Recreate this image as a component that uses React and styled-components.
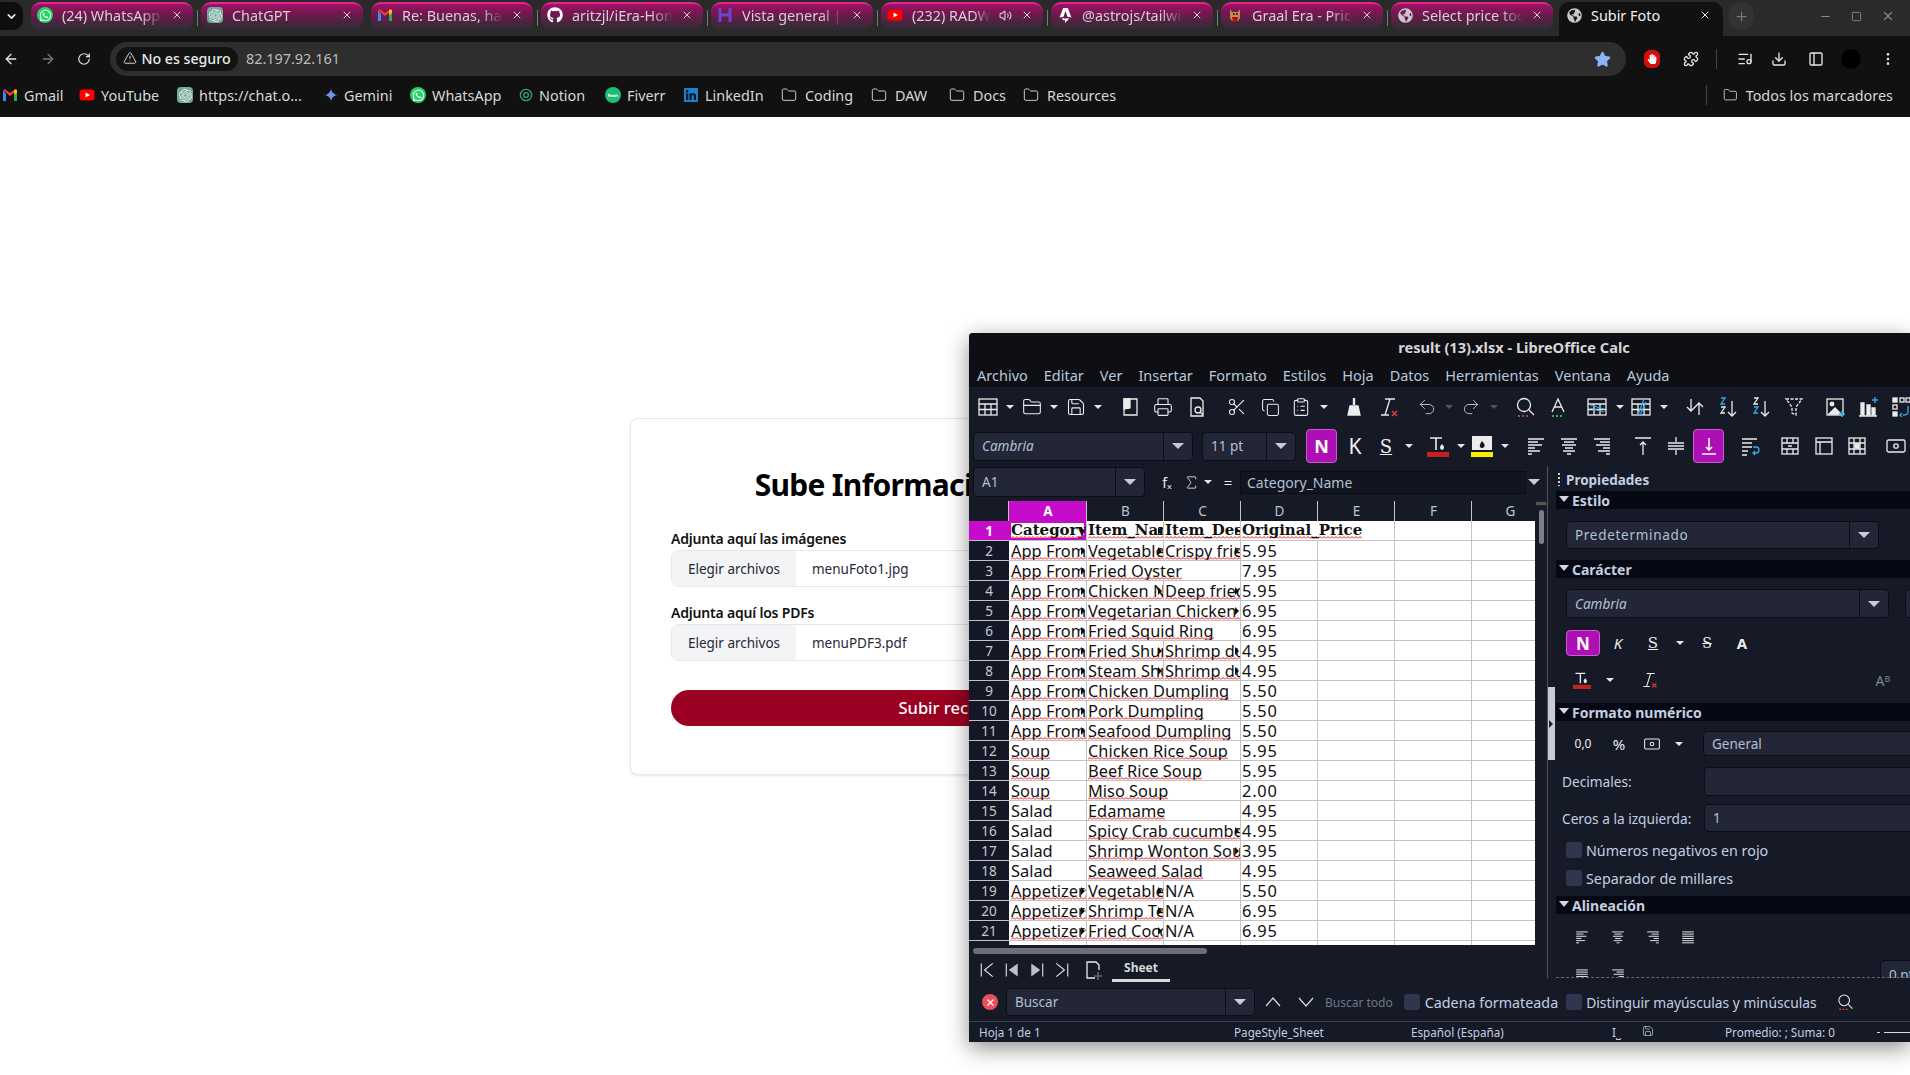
import React from "react";
import styled, { createGlobalStyle } from "styled-components";
import {
  ArrowLeft, ArrowRight, RotateCw, Star, Puzzle, Download, Folder, X, Plus, Minus,
  TriangleAlert, EllipsisVertical, Scissors, Printer, Undo2, Redo2, Copy,
  ClipboardList, Save, FolderClosed, Square, ListMusic, PanelLeft, Sigma, ChevronDown, Volume2,
} from "lucide-react";
import { FaWhatsapp, FaGithub, FaGlobeAmericas, FaLinkedin, FaHandPaper } from "react-icons/fa";
import { SiOpenai, SiFiverr, SiGooglegemini, SiAstro } from "react-icons/si";

const Global = createGlobalStyle`
  html, body { margin: 0; padding: 0; background: #fff; }
  body { width: 1910px; height: 1075px; overflow: hidden; font-family: "Noto Sans", sans-serif; }
`;

const Screen = styled.div`
  position: relative;
  width: 1910px;
  height: 1075px;
  overflow: hidden;
  background: #fff;
`;

/* browser chrome */
const TabStrip = styled.div`
  display: flex;
  align-items: flex-start;
  height: 36px;
  background: #2a2a2a;
  padding-top: 2px;
  box-sizing: border-box;
`;
const TabMenu = styled.div`
  width: 23px;
  height: 28px;
  margin-right: 8px;
  background: #0e0e0e;
  border-radius: 0 10px 10px 0;
  color: #eee;
  display: flex;
  align-items: center;
  justify-content: center;
`;
const Tab = styled.div`
  position: relative;
  display: flex;
  align-items: center;
  flex: none;
  width: ${(p) => (p.$active ? 164 : 162)}px;
  height: ${(p) => (p.$active ? 34 : 28)}px;
  margin-right: ${(p) => (p.$active ? 7 : 8)}px;
  margin-left: ${(p) => (p.$active ? -2 : 0)}px;
  padding: ${(p) => (p.$active ? "0 12px 8px 7px" : "0 10px 4px 6px")};
  box-sizing: border-box;
  border-radius: 10px 10px ${(p) => (p.$active ? "0 0" : "10px 10px")};
  color: ${(p) => (p.$active ? "#f1f1f1" : "#d4d0d4")};
  background: ${(p) => (p.$active ? "#111" : "linear-gradient(180deg, #a01268 0%, #7c1553 30%, #3a2a38 85%, #2f2a33 100%)")};
  border-top: ${(p) => (p.$active ? "0" : "2px solid #e4258f")};
  font-size: 14.4px;
  &::after {
    content: "";
    display: ${(p) => (p.$sep ? "block" : "none")};
    position: absolute;
    right: -5px;
    top: 6px;
    width: 1px;
    height: 16px;
    background: #777;
  }
`;
const Favicon = styled.span`
  flex: none;
  width: 16px;
  height: 16px;
  display: flex;
  align-items: center;
  justify-content: center;
  color: #fff;
`;
const TabTitle = styled.span`
  flex: 1;
  margin: 0 ${(p) => (p.$fade ? 8 : 0)}px 0 9px;
  white-space: nowrap;
  overflow: hidden;
  -webkit-mask-image: ${(p) => (p.$fade ? "linear-gradient(90deg, #000 78%, transparent 100%)" : "none")};
`;
const SoundIcon = styled.span`
  flex: none;
  display: flex;
  margin-right: 9px;
`;
const NewTab = styled.div`
  width: 26px;
  height: 28px;
  margin-left: -2px;
  border-radius: 13px;
  background: #333;
  color: #777;
  display: flex;
  align-items: center;
  justify-content: center;
`;
const WinControls = styled.div`
  margin-left: auto;
  display: flex;
  align-items: center;
  gap: 19px;
  height: 28px;
  padding-right: 15px;
  color: #888;
`;
const Toolbar = styled.div`
  display: flex;
  align-items: center;
  height: 43px;
  background: #111;
  padding: 3px 14px 0 3px;
  box-sizing: border-box;
  color: #e6e6e6;
`;
const NavBtn = styled.span`
  width: 16px;
  display: flex;
  justify-content: center;
  margin-left: ${(p) => p.$ml || 0}px;
  color: ${(p) => p.$c || "#e6e6e6"};
`;
const Omnibox = styled.div`
  width: 1516px;
  height: 34px;
  margin-left: 18px;
  flex: none;
  background: #2e2e2e;
  border-radius: 17px;
  display: flex;
  align-items: center;
  padding: 0 15px 0 6px;
  box-sizing: border-box;
`;
const Chip = styled.div`
  width: 122px;
  height: 24px;
  padding-bottom: 2px;
  background: #121212;
  border-radius: 12px;
  display: flex;
  align-items: center;
  justify-content: center;
  gap: 4px;
  font-size: 14.2px;
  color: #eaeaea;
  font-weight: 500;
  white-space: nowrap;
  box-sizing: border-box;
`;
const Url = styled.span`
  margin: 0 0 2px 8px;
  color: #bdbdbd;
  font-size: 14.4px;
  flex: 1;
`;
const BarSep = styled.span`
  width: 1px;
  height: 20px;
  background: #444;
  margin-left: ${(p) => p.$ml || 0}px;
`;
const StopBadge = styled.span`
  width: 16px;
  height: 18px;
  border-radius: 6px;
  background: #d60d0d;
  color: #fff;
  display: flex;
  align-items: center;
  justify-content: center;
  margin-left: ${(p) => p.$ml}px;
`;
const Avatar = styled.span`
  width: 20px;
  height: 20px;
  border-radius: 50%;
  background: #000;
  margin-left: ${(p) => p.$ml}px;
`;
const Bookmarks = styled.div`
  display: flex;
  align-items: center;
  height: 38px;
  background: #111;
  padding: 0 0 6px 2px;
  box-sizing: border-box;
  color: #d8d8d8;
  font-size: 14.4px;
`;
const Bookmark = styled.div`
  flex: none;
  width: ${(p) => p.$w}px;
  margin-left: ${(p) => p.$ml || 0}px;
  display: flex;
  align-items: center;
  gap: ${(p) => p.$gap || 6}px;
  white-space: nowrap;
`;
const RoundIcon = styled.span`
  display: flex;
  flex: none;
  width: 16px;
  height: 16px;
  border-radius: ${(p) => p.$r}px;
  background: ${(p) => p.$bg};
  align-items: center;
  justify-content: center;
`;

/* page form behind the window */
const Page = styled.main`
  height: 958px;
  display: flex;
  align-items: center;
  justify-content: center;
`;
const Card = styled.section`
  width: 650px;
  box-sizing: border-box;
  padding: 48px 40px 48px;
  background: #fff;
  border: 1px solid #e5e7eb;
  border-radius: 8px;
  box-shadow: 0 1px 3px rgba(0, 0, 0, 0.1);
`;
const Title = styled.h1`
  margin: 0 0 26px;
  padding-right: 6px;
  font-size: 30px;
  line-height: 36px;
  font-weight: 700;
  letter-spacing: -0.7px;
  color: #000;
  text-align: center;
  white-space: nowrap;
`;
const Label = styled.label`
  display: block;
  font-size: 14px;
  line-height: 20px;
  font-weight: 600;
  letter-spacing: -0.2px;
  color: #111;
  margin-bottom: 1px;
`;
const FileField = styled.div`
  display: flex;
  height: 37px;
  margin-bottom: 16px;
  border: 1px solid #e5e7eb;
  border-radius: 8px;
  overflow: hidden;
  font-size: 13.5px;
  color: #1f2937;
  box-sizing: border-box;
`;
const FileBtn = styled.span`
  width: 124px;
  padding-top: 1px;
  box-sizing: border-box;
  background: #f3f4f6;
  display: flex;
  align-items: center;
  justify-content: center;
`;
const FileName = styled.span`
  padding: 1px 0 0 16px;
  display: flex;
  align-items: center;
`;
const Submit = styled.button`
  display: block;
  width: 100%;
  height: 36px;
  margin-top: 29px;
  border: 0;
  border-radius: 18px;
  background: #990021;
  color: #fff;
  font: 500 16.5px "Noto Sans", sans-serif;
`;

/* LibreOffice window */
const Win = styled.div`
  position: absolute;
  left: 969px;
  top: 333px;
  width: 941px;
  height: 709px;
  background: #161a27;
  border-radius: 4px 0 0 0;
  box-shadow: 0 6px 22px rgba(0, 0, 0, 0.45);
  color: #c3cfe0;
  overflow: hidden;
`;
const WinTitle = styled.div`
  width: 1090px;
  height: 28px;
  background: #0d0f15;
  color: #d6d6d6;
  font-size: 14.6px;
  font-weight: 700;
  line-height: 29px;
  text-align: center;
`;
const Menu = styled.div`
  height: 26px;
  background: #0d0f15;
  display: flex;
  align-items: center;
  gap: 16px;
  padding: 2px 0 0 8px;
  box-sizing: border-box;
  font-size: 14.5px;
  color: #b8c8dc;
`;
const IconRow = styled.div`
  display: flex;
  align-items: center;
  height: ${(p) => p.$h}px;
  white-space: nowrap;
`;
const Tool = styled.span`
  flex: none;
  width: ${(p) => p.$w || 22}px;
  height: 22px;
  margin-left: ${(p) => p.$ml || 0}px;
  display: flex;
  align-items: center;
  justify-content: center;
  color: #ececec;
`;
const Drop = styled.span`
  flex: none;
  width: 8px;
  margin-left: ${(p) => p.$ml || 0}px;
  height: 0;
  border-left: 4px solid transparent;
  border-right: 4px solid transparent;
  border-top: 4px solid ${(p) => p.$c || "#e6e6e6"};
  box-sizing: border-box;
`;
const Combo = styled.div`
  flex: none;
  display: flex;
  width: ${(p) => p.$w}px;
  height: ${(p) => p.$h || 29}px;
  margin-left: ${(p) => p.$ml || 0}px;
  background: #222636;
  border: 1px solid #0c0e16;
  border-radius: 4px;
  box-sizing: border-box;
  font-size: 13.5px;
  color: #b2c0d4;
`;
const ComboText = styled.span`
  flex: 1;
  padding-left: ${(p) => p.$pl || 8}px;
  display: flex;
  align-items: center;
  font-style: ${(p) => (p.$italic ? "italic" : "normal")};
  letter-spacing: ${(p) => p.$ls || 0}px;
`;
const ComboArrow = styled.span`
  flex: none;
  width: 28px;
  border-left: 1px solid #0c0e16;
  display: flex;
  align-items: center;
  justify-content: center;
`;
const BigDrop = styled.span`
  width: 0;
  height: 0;
  border-left: 6px solid transparent;
  border-right: 6px solid transparent;
  border-top: 6px solid #c8ccd4;
`;
const ActiveBtn = styled.span`
  flex: none;
  width: ${(p) => p.$w || 31}px;
  height: ${(p) => p.$h || 34}px;
  margin-left: ${(p) => p.$ml || 0}px;
  background: #ae0fb5;
  border: 1px solid #c95fce;
  border-radius: 4px;
  box-sizing: border-box;
  color: #fff;
  font: 700 ${(p) => p.$fs || 18}px "Noto Sans", sans-serif;
  display: flex;
  align-items: center;
  justify-content: center;
`;
const Glyph = styled.span`
  flex: none;
  width: ${(p) => p.$w || 22}px;
  margin-left: ${(p) => p.$ml || 0}px;
  text-align: center;
  color: ${(p) => p.$c || "#eee"};
  font-family: ${(p) => (p.$serif ? '"DejaVu Serif", serif' : '"Noto Sans", sans-serif')};
  font-size: ${(p) => p.$fs || 18}px;
  font-weight: ${(p) => p.$weight || 400};
  font-style: ${(p) => (p.$italic ? "italic" : "normal")};
  text-decoration: ${(p) => p.$deco || "none"};
`;
const Body = styled.div`
  display: flex;
  align-items: flex-start;
  height: 517px;
  margin-top: 1px;
`;
const LeftCol = styled.div`
  width: 578px;
  flex: none;
`;
const FormulaRow = styled.div`
  display: flex;
  align-items: center;
  height: 35px;
  padding-bottom: 3px;
  box-sizing: border-box;
`;
const FormulaInput = styled.div`
  flex: none;
  width: 286px;
  height: 23px;
  margin-left: 1px;
  background: #121521;
  border: 1px solid #0a0c13;
  box-sizing: border-box;
  padding-left: 6px;
  font-size: 14px;
  line-height: 21px;
  color: #b2c0d4;
`;
const GridWrap = styled.div`
  display: flex;
  height: 444px;
  overflow: hidden;
`;
const Sheet = styled.div`
  width: 566px;
  flex: none;
  overflow: hidden;
`;
const Row = styled.div`
  display: flex;
  height: 20px;
`;
const RowHead = styled.div`
  flex: none;
  width: 40px;
  box-sizing: border-box;
  border-bottom: 1px solid #c4c4c4;
  background: ${(p) => (p.$on ? "#c60ccb" : "#141826")};
  color: ${(p) => (p.$on ? "#fff" : "#c9c9c9")};
  font-weight: ${(p) => (p.$on ? 700 : 400)};
  font-size: 13.5px;
  text-align: center;
  line-height: 20px;
`;
const ColHead = styled.div`
  flex: none;
  width: ${(p) => p.$w || 77}px;
  box-sizing: border-box;
  padding-left: 1px;
  border-right: 1px solid #c4c4c4;
  background: ${(p) => (p.$on ? "#c60ccb" : "#161a27")};
  color: ${(p) => (p.$on ? "#fff" : "#bcc6d4")};
  font-weight: ${(p) => (p.$on ? 700 : 400)};
  font-size: 13.5px;
  text-align: center;
  line-height: 20px;
`;
const Cell = styled.div`
  position: relative;
  flex: none;
  width: ${(p) => p.$w || 77}px;
  box-sizing: border-box;
  background: #fff;
  border-right: 1px solid #c4c4c4;
  border-bottom: 1px solid #c4c4c4;
  padding-left: ${(p) => p.$pl || 1}px;
  overflow: hidden;
  white-space: nowrap;
  color: #111;
  font: ${(p) => (p.$head ? '700 15px/19px "DejaVu Serif", serif' : '400 16.4px/19px "Noto Sans", sans-serif')};
  letter-spacing: ${(p) => p.$ls || 0}px;
  ${(p) => p.$sel && "box-shadow: inset 0 0 0 2px #c60ccb;"}
`;
/* LibreOffice's red spell-check zigzag */
const zigzag = "url(\"data:image/svg+xml,%3Csvg xmlns='http://www.w3.org/2000/svg' width='4' height='3'%3E%3Cpath d='M0 2.500L2 .500L4 2.500' fill='none' stroke='%23e8141c' stroke-width='1'/%3E%3C/svg%3E\")";
const Spell = styled.span`
  background-image: ${zigzag};
  background-size: 4px 3px;
  background-repeat: repeat-x;
  background-position: 0 calc(100% - ${(p) => p.$off ?? 2}px);
`;
const ClipMark = styled.i`
  position: absolute;
  right: 1px;
  top: 6px;
  border-left: 4px solid #111;
  border-top: 4px solid transparent;
  border-bottom: 4px solid transparent;
`;
const FillHandle = styled.i`
  position: absolute;
  right: 0;
  bottom: 0;
  width: 5px;
  height: 5px;
  background: #c60ccb;
`;
const VScroll = styled.div`
  width: 12px;
  flex: none;
  display: flex;
  flex-direction: column;
  align-items: center;
`;
const SplitMark = styled.span`
  width: 12px;
  height: 5px;
  margin-bottom: 4px;
  background: #555;
  border: 1px solid #222;
  box-sizing: border-box;
`;
const VThumb = styled.span`
  width: 5px;
  height: 34px;
  background: #7d7f86;
  border-radius: 3px;
`;
const HScroll = styled.div`
  height: 12px;
  padding: 3px 0 0 4px;
  box-sizing: border-box;
`;
const HThumb = styled.div`
  width: 234px;
  height: 6px;
  border-radius: 3px;
  background: #6c6f78;
`;
const SheetTab = styled.div`
  width: 58px;
  height: 24px;
  margin-left: 8px;
  border-bottom: 3px solid #d8d8d8;
  box-sizing: border-box;
  color: #d8d8d8;
  font-size: 12px;
  font-weight: 700;
  text-align: center;
  line-height: 20px;
`;
const Panel = styled.aside`
  position: relative;
  flex: none;
  width: 363px;
  height: 512px;
  border-left: 1px solid #50535e;
  box-sizing: border-box;
  overflow: hidden;
  padding-left: 8px;
  &::after {
    content: "";
    position: absolute;
    left: 8px;
    right: 0;
    bottom: 0;
    border-bottom: 1px dashed #666;
  }
`;
const PanelTitle = styled.div`
  height: 25px;
  display: flex;
  align-items: center;
  padding: 2px 0 0 1px;
  box-sizing: border-box;
  gap: 6px;
  font-size: 13.5px;
  font-weight: 700;
  color: #c3cfe0;
`;
const Grip = styled.span`
  width: 2px;
  height: 13px;
  background: repeating-linear-gradient(180deg, #d0d0d0 0 2px, transparent 2px 4px);
  margin-left: 1px;
`;
const SectionHead = styled.div`
  height: 18px;
  margin-top: ${(p) => p.$mt || 0}px;
  background: #060814;
  display: flex;
  align-items: center;
  gap: 3px;
  padding-left: 3px;
  font-size: 14px;
  font-weight: 700;
  color: #c3cfe0;
`;
const HeadDrop = styled.span`
  width: 0;
  height: 0;
  border-left: 5.5px solid transparent;
  border-right: 5.5px solid transparent;
  border-top: 6px solid #d6d6d6;
  margin-bottom: 3px;
`;
const PanelRow = styled.div`
  display: flex;
  align-items: center;
  height: ${(p) => p.$h}px;
  margin-top: ${(p) => p.$mt || 0}px;
  padding-left: ${(p) => (p.$pl === undefined ? 10 : p.$pl)}px;
  white-space: nowrap;
`;
const FieldLabel = styled.span`
  flex: none;
  width: 148px;
  padding-left: 6px;
  box-sizing: border-box;
  font-size: 13.7px;
  color: #c3cfe0;
`;
const Check = styled.span`
  flex: none;
  width: 16px;
  height: 16px;
  margin-left: ${(p) => p.$ml || 0}px;
  border-radius: 3px;
  background: #303550;
`;
const CheckText = styled.span`
  margin-left: ${(p) => p.$ml || 4}px;
  font-size: ${(p) => p.$fs || 14.3}px;
  color: #c3cfe0;
  white-space: nowrap;
`;
const DragHandle = styled.div`
  position: absolute;
  left: 0;
  top: 221px;
  width: 7px;
  height: 73px;
  background: #c9ccd6;
  display: flex;
  align-items: center;
  &::after {
    content: "";
    border-left: 4px solid #222;
    border-top: 4px solid transparent;
    border-bottom: 4px solid transparent;
    margin-left: 1px;
  }
`;
const FindBar = styled.div`
  display: flex;
  align-items: center;
  height: 38px;
  white-space: nowrap;
`;
const CloseDot = styled.span`
  flex: none;
  width: 16px;
  height: 16px;
  margin-left: 13px;
  border-radius: 50%;
  background: #ea4d5c;
  color: #fff;
  display: flex;
  align-items: center;
  justify-content: center;
`;
const FindAll = styled.span`
  margin-left: 8px;
  font-size: 12px;
  color: #6f7686;
`;
const Status = styled.div`
  display: flex;
  align-items: center;
  height: 21px;
  border-top: 1px solid #3e414c;
  box-sizing: border-box;
  font-size: 11.7px;
  color: #c3cfe0;
  white-space: nowrap;
`;
const StatusText = styled.span`
  flex: none;
  width: ${(p) => p.$w}px;
  padding-left: ${(p) => p.$pl || 0}px;
  box-sizing: border-box;
`;
const ZoomDash = styled.span`
  width: 7px;
  height: 1px;
  background: #ddd;
`;
const ZoomLine = styled.span`
  width: 60px;
  height: 1px;
  margin-left: 4px;
  background: #ddd;
`;

/* drawn icons */
const Ic = ({ children, size = 22, sw = 1.3, c = "#ececec" }) => (
  <svg width={size} height={size} viewBox="0 0 22 22" fill="none" stroke={c} strokeWidth={sw}>
    {children}
  </svg>
);
const Lines = ({ rows, size = 22 }) => (
  <Ic size={size}>
    {rows.map(([a, b, y]) => (
      <path key={y} d={`M${a} ${y}H${b}`} />
    ))}
  </Ic>
);
const AlignL = (p) => <Lines {...p} rows={[[3, 19, 4], [3, 13, 7], [3, 17, 10], [3, 10, 13], [3, 15, 16], [3, 7, 19]]} />;
const AlignC = (p) => <Lines {...p} rows={[[3, 19, 4], [6, 16, 7], [4, 18, 10], [7, 15, 13], [5, 17, 16], [9, 13, 19]]} />;
const AlignR = (p) => <Lines {...p} rows={[[3, 19, 4], [9, 19, 7], [5, 19, 10], [12, 19, 13], [7, 19, 16], [15, 19, 19]]} />;
const AlignJ = (p) => <Lines {...p} rows={[[3, 19, 4], [3, 19, 7], [3, 19, 10], [3, 19, 13], [3, 19, 16], [3, 19, 19]]} />;
const GridIcon = ({ blue, cols }) => (
  <Ic>
    <rect x="2" y="3" width="18" height="16" />
    <path d="M2 8H20M2 13.5H20M8 8V19M14 8V19" />
    {blue && <path d="M4 9l14 4M4 12l14 4" stroke="#39a9e8" />}
    {cols && <path d="M8 19L14 3M10 19L16 6" stroke="#39a9e8" />}
  </Ic>
);
const PdfIcon = () => (
  <Ic>
    <path d="M5 3H18V19H5Z" />
    <path d="M5 3H11V12L5 13Z" fill="#ececec" />
  </Ic>
);
const Preview = () => (
  <Ic>
    <path d="M5 2H14L17 5V20H5Z" />
    <circle cx="12" cy="14" r="3" />
    <path d="M14 16l3 3" />
  </Ic>
);
const Broom = () => (
  <Ic>
    <path d="M11 2V9" strokeWidth="2.4" />
    <path d="M7 10H15L17 19H5Z" fill="#ececec" />
  </Ic>
);
const ClearFmt = ({ size = 22 }) => (
  <Ic size={size}>
    <path d="M8 3H18M13 3L8 19M4 19H12" />
    <path d="M15 15l5 5M20 15l-5 5" stroke="#d43a3a" strokeWidth="1.6" />
  </Ic>
);
const SpellA = () => (
  <Ic>
    <path d="M5 16L11 3L17 16M7.5 11H14.5" />
    <path d="M5 20H17" stroke="#3bb54a" strokeDasharray="2 2" strokeWidth="1.8" />
  </Ic>
);
const FindIc = ({ size = 22 }) => (
  <Ic size={size}>
    <circle cx="10" cy="9" r="6.5" />
    <path d="M15 14l5 5" />
    <path d="M4 20H14" stroke="#e0592a" strokeDasharray="2 2" strokeWidth="1.6" />
  </Ic>
);
const SortIc = () => (
  <Ic>
    <path d="M7 3V15M3 11l4 4 4-4M15 19V7M11 11l4-4 4 4" />
  </Ic>
);
const SortAz = ({ flip }) => (
  <Ic>
    <path d="M15 5V20M11 16l4 4 4-4" />
    <path d="M4 2h4l-4 6h4" stroke={flip ? "#ececec" : "#39a9e8"} />
    <path d="M4 11h4l-4 6h4" stroke={flip ? "#39a9e8" : "#ececec"} />
  </Ic>
);
const FilterIc = () => (
  <Ic>
    <path d="M3 3H19L13 11V19L9 17V11Z" strokeDasharray="3 1.5" />
  </Ic>
);
const ImageIc = () => (
  <Ic>
    <rect x="3" y="3" width="16" height="16" />
    <circle cx="8" cy="8" r="1.8" fill="#ececec" />
    <path d="M5 18l6-6 3 3 3 3Z" fill="#ececec" />
    <path d="M18 15v6M15 18h6" stroke="#39a9e8" strokeWidth="1.6" />
  </Ic>
);
const ChartIc = () => (
  <Ic>
    <path d="M4 7h3v12H4ZM10 9h3v10h-3ZM15 12h3v7h-3Z" fill="#ececec" />
    <path d="M2 20H20" />
    <path d="M18 1v6M15 4h6" stroke="#39a9e8" strokeWidth="1.4" />
  </Ic>
);
const PivotIc = () => (
  <Ic>
    <rect x="3" y="2" width="4" height="4" fill="#ececec" />
    <rect x="10" y="2" width="4" height="4" />
    <rect x="16" y="2" width="4" height="4" />
    <rect x="3" y="9" width="4" height="4" />
    <rect x="3" y="16" width="4" height="4" fill="#ececec" />
    <path d="M18 10v6q0 3-5 3M12 17l-2 2 2 2" stroke="#39a9e8" />
  </Ic>
);
const TextColor = ({ size = 22, mark = 22 }) => (
  <Ic size={size} sw={1.6}>
    <path d="M3 3H15M9 3V15" />
    <path d="M15 9q3 3 1.5 5a2 2 0 0 1-3 0Q12 12 15 9Z" fill="#ececec" stroke="none" />
    <path d={`M0 19.5H${mark}`} stroke="#c4211f" strokeWidth="5" />
  </Ic>
);
const Highlight = () => (
  <Ic sw={1}>
    <path d="M1 1H21V15H1Z" fill="#ececec" stroke="none" />
    <path d="M11 6q4 4 2 6a3 3 0 0 1-4 0Q8 10 11 6Z" fill="#111" stroke="none" />
    <path d="M0 19.5H22" stroke="#f8ef00" strokeWidth="5" />
  </Ic>
);
const VTop = () => (
  <Ic><path d="M3 3H19M11 20V7M8 10l3-3 3 3" /></Ic>
);
const VMid = () => (
  <Ic><path d="M3 11H19M3 8H19M3 14H19M11 2V7M11 15V20" /></Ic>
);
const VBot = () => (
  <Ic sw={1.6} c="#fff"><path d="M4 19H18M11 3V15M8 12l3 3 3-3" /></Ic>
);
const WrapIc = () => (
  <Ic>
    <path d="M3 4H18M3 8H13M3 12H13M3 16H9M3 20H8" />
    <path d="M14 12h3q3 0 3 3t-3 3h-3M16 16l-2 2 2 2" stroke="#39a9e8" />
  </Ic>
);
const MergeA = () => (
  <Ic><rect x="3" y="3" width="16" height="16" /><path d="M3 8H19M3 14H19M8 3V8M14 3V8M8 14V19M14 14V19M9 11H13" /></Ic>
);
const MergeB = () => (
  <Ic><rect x="3" y="3" width="16" height="16" /><path d="M3 7H19M7 7V19" /></Ic>
);
const MergeC = () => (
  <Ic><rect x="3" y="3" width="16" height="16" /><path d="M3 8H19M3 14H19M8 3V19M14 3V19" /><rect x="9" y="9" width="4" height="4" fill="#ececec" /></Ic>
);
const Currency = ({ size = 22 }) => (
  <Ic size={size}><rect x="2" y="5" width="18" height="12" rx="1.5" /><circle cx="11" cy="11" r="2.2" /></Ic>
);
const NavFirst = () => <Ic size={18}><path d="M4 3V19M18 3L8 11l10 8" /></Ic>;
const NavPrev = () => <Ic size={18}><path d="M4 3V19" /><path d="M18 3L7 11l11 8Z" fill="#c0c0c0" stroke="none" /></Ic>;
const NavNext = () => <Ic size={18}><path d="M18 3V19" /><path d="M4 3l11 8-11 8Z" fill="#c0c0c0" stroke="none" /></Ic>;
const NavLast = () => <Ic size={18}><path d="M18 3V19M4 3l10 8-10 8" /></Ic>;
const NewSheet = () => (
  <Ic>
    <path d="M13 19H5V3H14L17 6V11" />
    <path d="M16 13v8M12 17h8" stroke="#666" strokeWidth="1.6" />
  </Ic>
);
const Chevron = ({ d }) => (
  <svg width="16" height="10" viewBox="0 0 16 10" fill="none" stroke="#ddd" strokeWidth="1.2"><path d={d} /></svg>
);
const GmailIc = ({ size = 16 }) => (
  <svg width={size} height={size} viewBox="0 0 16 16">
    <path d="M1 3v11h3V7z" fill="#4285f4" />
    <path d="M15 3v11h-3V7z" fill="#34a853" />
    <path d="M1 3l7 6 7-6-1.5-1L8 6 2.5 2z" fill="#ea4335" />
    <path d="M13 2.5l2 .5v3l-3 2V3z" fill="#fbbc04" />
  </svg>
);
const YoutubeIc = () => (
  <svg width="16" height="16" viewBox="0 0 16 16">
    <rect x="0.5" y="2.5" width="15" height="11" rx="3" fill="#f00" />
    <path d="M6.500 5.500L11 8l-4.500 2.500z" fill="#fff" />
  </svg>
);
const GptIc = () => (
  <RoundIcon $r={4} $bg="#74aa9c"><SiOpenai size={13} color="#e6f0ee" /></RoundIcon>
);
const WaIc = () => (
  <RoundIcon $r={8} $bg="#25d366"><FaWhatsapp size={13} color="#fff" /></RoundIcon>
);
const NotionIc = () => (
  <svg width="14" height="14" viewBox="0 0 14 14" fill="none" stroke="#2f9e6e" strokeWidth="1.4">
    <circle cx="7" cy="7" r="5.6" />
    <circle cx="7" cy="7" r="2.4" />
  </svg>
);
const FiverrIc = () => (
  <RoundIcon $r={8} $bg="#1dbf73"><SiFiverr size={11} color="#fff" /></RoundIcon>
);
const HostingerLogo = () => (
  <svg width="16" height="16" viewBox="0 0 16 16" fill="none" stroke="#6a45d0" strokeWidth="3">
    <path d="M3 1V15M13 1V15" />
    <path d="M3 8H13" />
  </svg>
);
const GraalIc = () => (
  <svg width="16" height="16" viewBox="0 0 16 16">
    <path d="M3 2l2 3h6l2-3v9l-2 3H5l-2-3Z" fill="#c88a4a" />
    <path d="M5 10h6l-1 5H6Z" fill="#a11" />
    <rect x="6" y="6" width="1.500" height="2" fill="#222" />
    <rect x="9" y="6" width="1.500" height="2" fill="#222" />
  </svg>
);

const Drag = () => <Folder size={16} strokeWidth={1.5} color="#c8c8c8" />;

const tabs = [
  { t: "(24) WhatsApp", i: <WaIc />, sep: true },
  { t: "ChatGPT", i: <GptIc /> },
  { t: "Re: Buenas, hablamos", i: <GmailIc />, sep: true },
  { t: "aritzjl/iEra-Home", i: <FaGithub size={16} />, sep: true },
  { t: "Vista general | Hostinger", i: <HostingerLogo />, sep: true },
  { t: "(232) RADWIMPS", i: <YoutubeIc />, sound: true, sep: true },
  { t: "@astrojs/tailwind", i: <SiAstro size={15} color="#fff" />, sep: true },
  { t: "Graal Era - Price", i: <GraalIc />, sep: true },
  { t: "Select price tool", i: <FaGlobeAmericas size={15} color="#c8c8c8" /> },
];

const marks = [
  { t: "Gmail", i: <GmailIc />, w: 77 },
  { t: "YouTube", i: <YoutubeIc />, w: 98 },
  { t: "https://chat.o...", i: <GptIc />, w: 147 },
  { t: "Gemini", i: <SiGooglegemini size={14} color="#6d96e8" />, w: 86 },
  { t: "WhatsApp", i: <WaIc />, w: 109 },
  { t: "Notion", i: <NotionIc />, w: 86 },
  { t: "Fiverr", i: <FiverrIc />, w: 78 },
  { t: "LinkedIn", i: <FaLinkedin size={16} color="#1d7fd0" />, w: 98 },
  { t: "Coding", i: <Drag />, w: 90, gap: 8 },
  { t: "DAW", i: <Drag />, w: 78, gap: 8 },
  { t: "Docs", i: <Drag />, w: 74, gap: 8 },
  { t: "Resources", i: <Drag />, w: 100, gap: 8 },
];

const app = "App From Kitchen";
const sheetRows = [
  [app, "Vegetable Spring Roll", "Crispy fried rolls", "5.95"],
  [app, "Fried Oyster", null, "7.95"],
  [app, "Chicken Nuggets", "Deep fried chicken", "5.95"],
  [app, "Vegetarian Chicken Wings", null, "6.95"],
  [app, "Fried Squid Ring", null, "6.95"],
  [app, "Fried Shumai", "Shrimp dumpling", "4.95"],
  [app, "Steam Shumai", "Shrimp dumpling", "4.95"],
  [app, "Chicken Dumpling", null, "5.50"],
  [app, "Pork Dumpling", null, "5.50"],
  [app, "Seafood Dumpling", null, "5.50"],
  ["Soup", "Chicken Rice Soup", null, "5.95"],
  ["Soup", "Beef Rice Soup", null, "5.95"],
  ["Soup", "Miso Soup", null, "2.00"],
  ["Salad", "Edamame", null, "4.95"],
  ["Salad", "Spicy Crab cucumber salad", null, "4.95"],
  ["Salad", "Shrimp Wonton Soup Bowl", null, "3.95"],
  ["Salad", "Seaweed Salad", null, "4.95"],
  ["Appetizers", "Vegetable Samosa", "N/A", "5.50"],
  ["Appetizers", "Shrimp Tempura", "N/A", "6.95"],
  ["Appetizers", "Fried Coconut Shrimp", "N/A", "6.95"],
  ["Appetizers", "Fried Dumpling", "N/A", "6.95"],
];
const plainWords = ["Salad", "N/A"];

const TextCell = ({ text, w, pl }) => {
  const number = /^\d/.test(text);
  const plain = number || plainWords.includes(text);
  const clipped = text.length * 8.2 > w;
  return (
    <Cell $w={w} $pl={pl} $ls={number ? 0.8 : 0}>
      {plain ? text : <Spell>{text}</Spell>}
      {clipped && <ClipMark />}
    </Cell>
  );
};

const SheetRow = ({ n, row }) => (
  <Row>
    <RowHead>{n}</RowHead>
    <TextCell text={row[0]} w={78} pl={2} />
    {row[2] ? (
      <>
        <TextCell text={row[1]} w={77} />
        <TextCell text={row[2]} w={77} />
      </>
    ) : (
      <TextCell text={row[1]} w={154} />
    )}
    <TextCell text={row[3]} w={77} />
    <Cell /><Cell /><Cell />
  </Row>
);

export default function App() {
  return (
    <Screen>
      <Global />
      <TabStrip>
        <TabMenu><ChevronDown size={13} strokeWidth={3} /></TabMenu>
        {tabs.map((tab) => (
          <Tab key={tab.t} $sep={tab.sep}>
            <Favicon>{tab.i}</Favicon>
            <TabTitle $fade>{tab.t}</TabTitle>
            {tab.sound && <SoundIcon><Volume2 size={13} /></SoundIcon>}
            <X size={12} strokeWidth={2} />
          </Tab>
        ))}
        <Tab $active>
          <Favicon><FaGlobeAmericas size={15} color="#c8c8c8" /></Favicon>
          <TabTitle>Subir Foto</TabTitle>
          <X size={12} strokeWidth={2} />
        </Tab>
        <NewTab><Plus size={15} /></NewTab>
        <WinControls>
          <Minus size={13} />
          <Square size={11} />
          <X size={14} />
        </WinControls>
      </TabStrip>
      <Toolbar>
        <NavBtn><ArrowLeft size={16} /></NavBtn>
        <NavBtn $ml={21} $c="#777"><ArrowRight size={16} /></NavBtn>
        <NavBtn $ml={20}><RotateCw size={14} /></NavBtn>
        <Omnibox>
          <Chip><TriangleAlert size={14} strokeWidth={1.5} />No es seguro</Chip>
          <Url>82.197.92.161</Url>
          <Star size={17} fill="#8ab4f8" color="#8ab4f8" />
        </Omnibox>
        <StopBadge $ml={18}><FaHandPaper size={10} /></StopBadge>
        <NavBtn $ml={23}><Puzzle size={16} /></NavBtn>
        <BarSep $ml={17} />
        <NavBtn $ml={20}><ListMusic size={16} /></NavBtn>
        <NavBtn $ml={18}><Download size={16} /></NavBtn>
        <NavBtn $ml={21}><PanelLeft size={16} /></NavBtn>
        <Avatar $ml={17} />
        <NavBtn $ml={19}><EllipsisVertical size={16} /></NavBtn>
      </Toolbar>
      <Bookmarks>
        {marks.map((m) => (
          <Bookmark key={m.t} $w={m.w} $gap={m.gap}>{m.i}{m.t}</Bookmark>
        ))}
        <BarSep $ml={583} />
        <Bookmark $w={170} $gap={8} $ml={16}><Drag />Todos los marcadores</Bookmark>
      </Bookmarks>

      <Page>
        <Card>
          <Title>Sube Información del Menú</Title>
          <Label>Adjunta aquí las imágenes</Label>
          <FileField>
            <FileBtn>Elegir archivos</FileBtn>
            <FileName>menuFoto1.jpg</FileName>
          </FileField>
          <Label>Adjunta aquí los PDFs</Label>
          <FileField>
            <FileBtn>Elegir archivos</FileBtn>
            <FileName>menuPDF3.pdf</FileName>
          </FileField>
          <Submit>Subir recursos</Submit>
        </Card>
      </Page>

      <Win>
        <WinTitle>result (13).xlsx - LibreOffice Calc</WinTitle>
        <Menu>
          {["Archivo", "Editar", "Ver", "Insertar", "Formato", "Estilos", "Hoja", "Datos", "Herramientas", "Ventana", "Ayuda"].map((m) => (
            <span key={m}>{m}</span>
          ))}
        </Menu>
        <IconRow $h={40}>
          <Tool $ml={8}><GridIcon /></Tool><Drop $ml={7} />
          <Tool $ml={7}><FolderClosed size={20} strokeWidth={1.3} /></Tool><Drop $ml={7} />
          <Tool $ml={7}><Save size={20} strokeWidth={1.3} /></Tool><Drop $ml={7} />
          <Tool $ml={17}><PdfIcon /></Tool>
          <Tool $ml={11}><Printer size={20} strokeWidth={1.3} /></Tool>
          <Tool $ml={12}><Preview /></Tool>
          <Tool $ml={18}><Scissors size={20} strokeWidth={1.3} /></Tool>
          <Tool $ml={11}><Copy size={19} strokeWidth={1.3} /></Tool>
          <Tool $ml={9}><ClipboardList size={20} strokeWidth={1.3} /></Tool><Drop $ml={8} />
          <Tool $ml={15}><Broom /></Tool>
          <Tool $ml={12}><ClearFmt /></Tool>
          <Tool $ml={17}><Undo2 size={20} strokeWidth={1.2} color="#bbb" /></Tool><Drop $ml={7} $c="#555" />
          <Tool $ml={7}><Redo2 size={20} strokeWidth={1.2} color="#bbb" /></Tool><Drop $ml={8} $c="#555" />
          <Tool $ml={16}><FindIc /></Tool>
          <Tool $ml={11}><SpellA /></Tool>
          <Tool $ml={17}><GridIcon blue /></Tool><Drop $ml={8} />
          <Tool $ml={6}><GridIcon cols /></Tool><Drop $ml={8} />
          <Tool $ml={16}><SortIc /></Tool>
          <Tool $ml={11}><SortAz /></Tool>
          <Tool $ml={11}><SortAz flip /></Tool>
          <Tool $ml={11}><FilterIc /></Tool>
          <Tool $ml={19}><ImageIc /></Tool>
          <Tool $ml={11}><ChartIc /></Tool>
          <Tool $ml={11}><PivotIc /></Tool>
        </IconRow>
        <IconRow $h={38}>
          <Combo $w={220} $ml={4}>
            <ComboText $italic>Cambria</ComboText>
            <ComboArrow><BigDrop /></ComboArrow>
          </Combo>
          <Combo $w={94} $ml={9}>
            <ComboText>11 pt</ComboText>
            <ComboArrow><BigDrop /></ComboArrow>
          </Combo>
          <ActiveBtn $ml={10}>N</ActiveBtn>
          <Glyph $ml={7} $fs={21}>K</Glyph>
          <Glyph $ml={9} $fs={18} $serif $deco="underline">S</Glyph>
          <Drop $ml={8} />
          <Tool $ml={14}><TextColor /></Tool><Drop $ml={8} />
          <Tool $ml={6}><Highlight /></Tool><Drop $ml={8} />
          <Tool $ml={16}><AlignL /></Tool>
          <Tool $ml={11}><AlignC /></Tool>
          <Tool $ml={11}><AlignR /></Tool>
          <Tool $ml={19}><VTop /></Tool>
          <Tool $ml={11}><VMid /></Tool>
          <ActiveBtn $ml={6}><VBot /></ActiveBtn>
          <Tool $ml={15}><WrapIc /></Tool>
          <Tool $ml={18}><MergeA /></Tool>
          <Tool $ml={12}><MergeB /></Tool>
          <Tool $ml={11}><MergeC /></Tool>
          <Tool $ml={17}><Currency /></Tool>
        </IconRow>
        <Body>
          <LeftCol>
            <FormulaRow>
              <Combo $w={172} $h={30} $ml={4}>
                <ComboText>A1</ComboText>
                <ComboArrow><BigDrop /></ComboArrow>
              </Combo>
              <Glyph $ml={11} $fs={14}>fₓ</Glyph>
              <Tool $ml={2}><Sigma size={17} strokeWidth={1.2} /></Tool>
              <Drop $ml={2} />
              <Glyph $ml={5} $fs={15}>=</Glyph>
              <FormulaInput>Category_Name</FormulaInput>
              <Tool $ml={-2} $w={20}><BigDrop /></Tool>
            </FormulaRow>
            <GridWrap>
              <Sheet>
                <Row>
                  <ColHead $w={40} />
                  <ColHead $on $w={78}>A</ColHead>
                  {["B", "C", "D", "E", "F", "G"].map((c) => <ColHead key={c}>{c}</ColHead>)}
                </Row>
                <Row>
                  <RowHead $on>1</RowHead>
                  <Cell $head $sel $w={78} $pl={2}><Spell $off={0}>Category_Name</Spell><ClipMark /><FillHandle /></Cell>
                  <Cell $head><Spell $off={0}>Item_Name</Spell><ClipMark /></Cell>
                  <Cell $head><Spell $off={0}>Item_Description</Spell><ClipMark /></Cell>
                  <Cell $head $w={154}><Spell $off={0}>Original_Price</Spell></Cell>
                  <Cell /><Cell />
                </Row>
                {sheetRows.map((r, i) => (
                  <SheetRow key={i} n={i + 2} row={r} />
                ))}
              </Sheet>
              <VScroll>
                <SplitMark />
                <VThumb />
              </VScroll>
            </GridWrap>
            <HScroll><HThumb /></HScroll>
            <IconRow $h={26}>
              <Tool $ml={7}><NavFirst /></Tool>
              <Tool $ml={3}><NavPrev /></Tool>
              <Tool $ml={3}><NavNext /></Tool>
              <Tool $ml={3}><NavLast /></Tool>
              <Tool $ml={9}><NewSheet /></Tool>
              <SheetTab>Sheet</SheetTab>
            </IconRow>
          </LeftCol>
          <Panel>
            <DragHandle />
            <PanelTitle><Grip />Propiedades</PanelTitle>
            <SectionHead><HeadDrop />Estilo</SectionHead>
            <PanelRow $h={28} $mt={12}>
              <Combo $w={313} $h={28}>
                <ComboText $ls={0.7}>Predeterminado</ComboText>
                <ComboArrow><BigDrop /></ComboArrow>
              </Combo>
            </PanelRow>
            <SectionHead $mt={11}><HeadDrop />Carácter</SectionHead>
            <PanelRow $h={29} $mt={11}>
              <Combo $w={323}>
                <ComboText $italic>Cambria</ComboText>
                <ComboArrow><BigDrop /></ComboArrow>
              </Combo>
              <Combo $w={30} $ml={16} />
            </PanelRow>
            <PanelRow $h={26} $mt={12}>
              <ActiveBtn $w={34} $h={26} $fs={17}>N</ActiveBtn>
              <Glyph $ml={1} $w={34} $italic $fs={15}>K</Glyph>
              <Glyph $ml={1} $w={34} $fs={15} $serif $deco="underline">S</Glyph>
              <Drop $ml={6} />
              <Glyph $ml={6} $w={34} $fs={14} $serif $deco="line-through">S</Glyph>
              <Glyph $ml={1} $w={34} $fs={15} $weight={700}>A</Glyph>
            </PanelRow>
            <PanelRow $h={26} $mt={11} $pl={15}>
              <Tool $w={22}><TextColor size={18} /></Tool>
              <Drop $ml={13} />
              <Tool $ml={24}><ClearFmt size={18} /></Tool>
              <Glyph $ml={211} $fs={14} $w={24} $c="#7f8694">Aᴮ</Glyph>
            </PanelRow>
            <SectionHead $mt={10}><HeadDrop />Formato numérico</SectionHead>
            <PanelRow $h={25} $mt={10} $pl={12}>
              <Glyph $w={30} $fs={12}>0,0</Glyph>
              <Glyph $ml={6} $w={30} $fs={15}>%</Glyph>
              <Tool $ml={7}><Currency size={18} /></Tool>
              <Drop $ml={12} />
              <Combo $w={230} $h={25} $ml={20}>
                <ComboText>General</ComboText>
              </Combo>
            </PanelRow>
            <PanelRow $h={29} $mt={11} $pl={0}>
              <FieldLabel>Decimales:</FieldLabel>
              <Combo $w={230} />
            </PanelRow>
            <PanelRow $h={28} $mt={8} $pl={0}>
              <FieldLabel>Ceros a la izquierda:</FieldLabel>
              <Combo $w={230} $h={28}><ComboText>1</ComboText></Combo>
            </PanelRow>
            <PanelRow $h={16} $mt={10}>
              <Check /><CheckText>Números negativos en rojo</CheckText>
            </PanelRow>
            <PanelRow $h={16} $mt={12}>
              <Check /><CheckText>Separador de millares</CheckText>
            </PanelRow>
            <SectionHead $mt={10}><HeadDrop />Alineación</SectionHead>
            <PanelRow $h={18} $mt={14} $pl={17}>
              <Tool $w={18}><AlignL size={16} /></Tool>
              <Tool $w={18} $ml={18}><AlignC size={16} /></Tool>
              <Tool $w={18} $ml={17}><AlignR size={16} /></Tool>
              <Tool $w={18} $ml={17}><AlignJ size={16} /></Tool>
            </PanelRow>
            <PanelRow $h={18} $mt={20} $pl={17}>
              <Tool $w={18}><AlignJ size={16} /></Tool>
              <Tool $w={18} $ml={18}><AlignR size={16} /></Tool>
              <Combo $w={60} $h={30} $ml={253}>
                <ComboText>0 pt</ComboText>
              </Combo>
            </PanelRow>
          </Panel>
        </Body>
        <FindBar>
          <CloseDot><X size={11} strokeWidth={2.5} /></CloseDot>
          <Combo $w={249} $h={28} $ml={8}>
            <ComboText>Buscar</ComboText>
            <ComboArrow><BigDrop /></ComboArrow>
          </Combo>
          <Tool $ml={7}><Chevron d="M1 9l7-8 7 8" /></Tool>
          <Tool $ml={11}><Chevron d="M1 1l7 8 7-8" /></Tool>
          <FindAll>Buscar todo</FindAll>
          <Check $ml={11} /><CheckText $ml={5}>Cadena formateada</CheckText>
          <Check $ml={8} /><CheckText $fs={13.8}>Distinguir mayúsculas y minúsculas</CheckText>
          <Tool $ml={17}><FindIc size={18} /></Tool>
        </FindBar>
        <Status>
          <StatusText $w={265} $pl={10}>Hoja 1 de 1</StatusText>
          <StatusText $w={177}>PageStyle_Sheet</StatusText>
          <StatusText $w={201}>Español (España)</StatusText>
          <StatusText $w={30}>I⎵</StatusText>
          <StatusText $w={83}><Save size={12} strokeWidth={1.4} /></StatusText>
          <StatusText $w={152}>Promedio: ; Suma: 0</StatusText>
          <ZoomDash />
          <ZoomLine />
        </Status>
      </Win>
    </Screen>
  );
}
